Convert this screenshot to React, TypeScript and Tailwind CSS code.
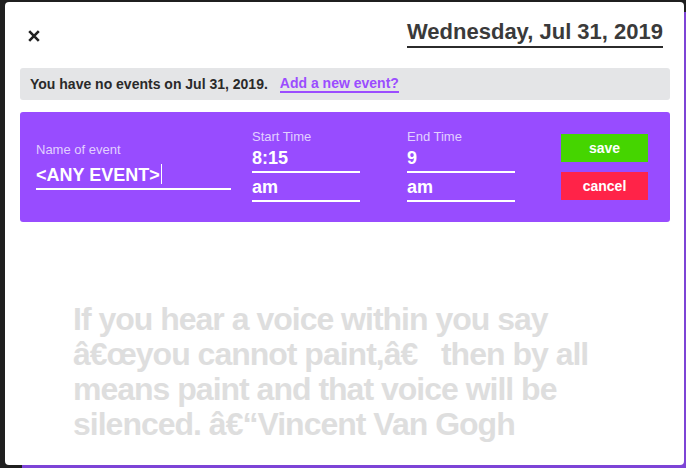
import React from "react";

const font = { fontFamily: '"Liberation Sans", Arial, sans-serif' };

function Field({ value, caret }: { value: string; caret?: boolean }) {
  return (
    <div className="mt-[4px] border-b-2 border-white pb-[2px] text-[18px] font-bold leading-[21px] text-white">
      {value}
      {caret && <span className="ml-[1px] inline-block h-[20px] w-px translate-y-[3px] bg-white align-baseline" />}
    </div>
  );
}

export default function App() {
  return (
    <div className="relative h-[468px] w-[686px] overflow-hidden bg-[#1f1f1f]" style={font}>
      {/* page behind the modal */}
      <div className="absolute bottom-0 left-[22px] right-0 top-[12px] bg-[#7d44d6]" />

      <div className="absolute left-[5px] top-[2px] h-[463px] w-[679px] overflow-hidden rounded-[4px] bg-white pt-[18px]">
        <div className="flex items-start justify-between pl-[23px] pr-[21px]">
          <svg width="12" height="12" viewBox="0 0 12 12" className="mt-[10px]">
            <path d="M1.2 1.2 L10.8 10.8 M10.8 1.2 L1.2 10.8" stroke="#222" strokeWidth="2.6" />
          </svg>
          <div className="border-b-2 border-[#2b2b2b] pb-[2px] text-[22px] font-bold leading-[24px] text-[#3a3a3a]">
            Wednesday, Jul 31, 2019
          </div>
        </div>

        <div className="ml-[15px] mt-[20px] flex h-[32px] w-[650px] items-center rounded-[3px] bg-[#e4e5e7] px-[10px] text-[14px] font-bold text-[#2a2a2a]">
          <span>You have no events on Jul 31, 2019.</span>
          <span className="ml-[12px] border-b-2 border-[#9b4dff] leading-[16px] text-[#9b4dff]">Add a new event?</span>
        </div>

        <div className="ml-[15px] mt-[12px] flex h-[110px] w-[650px] items-center rounded-[3px] bg-[#984cff] pb-[3px] pl-[16px]">
          <div className="w-[195px]">
            <div className="text-[13px] leading-[15px] text-[#e2d0ff]">Name of event</div>
            <Field value="<ANY EVENT>" caret />
          </div>
          <div className="ml-[21px] w-[108px]">
            <div className="text-[13px] leading-[15px] text-[#e2d0ff]">Start Time</div>
            <Field value="8:15" />
            <Field value="am" />
          </div>
          <div className="ml-[47px] w-[108px]">
            <div className="text-[13px] leading-[15px] text-[#e2d0ff]">End Time</div>
            <Field value="9" />
            <Field value="am" />
          </div>
          <div className="ml-[46px] mt-[3px] flex w-[87px] flex-col gap-[10px]">
            <div className="flex h-[28px] items-center justify-center bg-[#45d500] text-[14px] font-bold text-white">save</div>
            <div className="flex h-[28px] items-center justify-center bg-[#ff2348] text-[14px] font-bold text-white">cancel</div>
          </div>
        </div>

        <div className="ml-[68px] mt-[80px] w-[540px] text-[32px] font-bold leading-[35px] tracking-[-1px] text-[#dedede]">
          If you hear a voice within you say â€œyou cannot paint,â€{"\u00a0\u00a0"} then by all means paint and that voice will be silenced. â€“Vincent Van Gogh
        </div>
      </div>
    </div>
  );
}
